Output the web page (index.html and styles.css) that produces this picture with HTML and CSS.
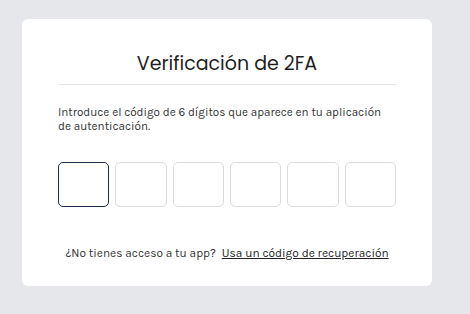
FILE: index.html
```html
<!DOCTYPE html>
<html lang="es">
<head>
  <meta charset="UTF-8" />
  <meta name="viewport" content="width=device-width, initial-scale=1.0" />
  <title>Verificación de 2FA</title>
  <link rel="stylesheet" href="styles.css">
</head>
<body>
  <div class="card">
    <h1 class="title">Verificación de 2FA</h1>
    <p class="desc">Introduce el código de 6 dígitos que aparece en tu aplicación de autenticación.</p>
    <div class="code-row">
      <input class="digit active" type="text" maxlength="1" />
      <input class="digit" type="text" maxlength="1" />
      <input class="digit" type="text" maxlength="1" />
      <input class="digit" type="text" maxlength="1" />
      <input class="digit" type="text" maxlength="1" />
      <input class="digit" type="text" maxlength="1" />
    </div>
    <p class="footer">¿No tienes acceso a tu app? <a href="#" class="recovery">Usa un código de recuperación</a></p>
  </div>
</body>
</html>
```

FILE: styles.css
```css
body {
  margin: 0;
  padding: 19px 0 0 22px;
  background: #e5e7eb;
  font-family: Karla, 'Open Sans', sans-serif;
  color: #2b2b2b;
}
.card {
  box-sizing: border-box;
  width: 410px;
  height: 267px;
  background: #fff;
  border-radius: 6px;
  padding: 31px 36px 25px;
}
.title {
  margin: 0;
  font-family: Poppins, 'Open Sans', sans-serif;
  font-weight: 400;
  font-size: 19px;
  line-height: 28px;
  text-align: center;
  color: #1f1f1f;
  padding-bottom: 6px;
  border-bottom: 1px solid #e8e8ec;
}
.desc {
  margin: 20px 0 0;
  font-size: 11.7px;
  line-height: 14px;
  color: #333;
}
.code-row {
  display: flex;
  gap: 6px;
  margin-top: 29px;
}
.digit {
  flex: 1;
  min-width: 0;
  box-sizing: border-box;
  height: 45px;
  border: 1px solid #dcdcdc;
  border-radius: 5px;
  outline: none;
  text-align: center;
  font-size: 18px;
}
.digit.active {
  border-color: #1c2b4b;
}
.footer {
  margin: 39px 0 0;
  font-size: 11.9px;
  line-height: 15px;
  text-align: center;
  color: #333;
}
.recovery {
  color: #222;
  margin-left: 3px;
}
```
